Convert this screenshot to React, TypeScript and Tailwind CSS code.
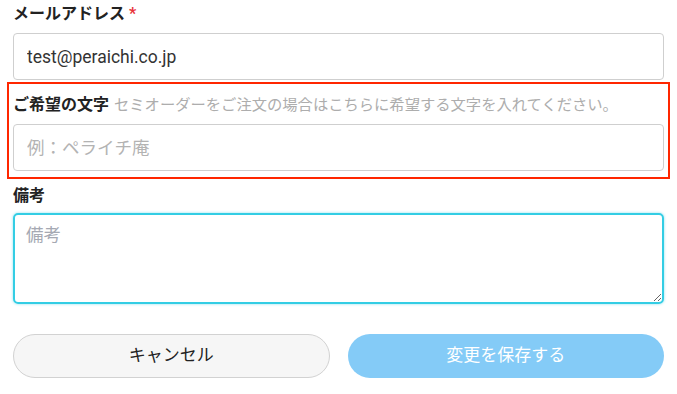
import React from 'react';

const font = "font-['Roboto','Noto_Sans_CJK_JP',sans-serif]";

const App: React.FC = () => {
  return (
    <div className={`w-[677px] h-[394px] bg-white px-[13px] pt-[4px] overflow-hidden ${font}`}>
      <div>
        <label className="block text-[16px] font-bold leading-[20px] text-[#222]">
          メールアドレス<span className="ml-[4px] text-[#e8333a]">*</span>
        </label>
        <input
          type="text"
          defaultValue="test@peraichi.co.jp"
          className="mt-[9px] block w-full h-[47px] rounded-[4px] border border-[#cfcfcf] px-[13px] text-[17.5px] text-[#333] outline-none"
        />
      </div>

      <div className="-mx-[6px] mt-[2px] border-[2.5px] border-[#ff2600] px-[4px] pt-[11px] pb-[6px]">
        <label className="block text-[16px] leading-[20px]">
          <span className="font-bold text-[#222]">ご希望の文字</span>
          <span className="ml-[5px] text-[15.3px] text-[#adadad]">
            セミオーダーをご注文の場合はこちらに希望する文字を入れてください。
          </span>
        </label>
        <input
          type="text"
          placeholder="例：ペライチ庵"
          className="mt-[9px] block w-full h-[47px] rounded-[4px] border border-[#cfcfcf] px-[13px] text-[17.5px] text-[#333] placeholder:text-[#b3b3b3] outline-none"
        />
      </div>

      <div className="mt-[7px]">
        <label className="block text-[16px] font-bold leading-[20px] text-[#222]">備考</label>
        <textarea
          placeholder="備考"
          autoFocus
          className="mt-[7px] block w-full h-[91px] rounded-[5px] border-2 border-[#33cde4] px-[11px] py-[7px] text-[17.5px] text-[#333] placeholder:text-[#a5a9b3] outline-none shadow-[0_0_3px_#8fe0ee]"
        />
      </div>

      <div className="mt-[30px] grid grid-cols-2 gap-[18px]">
        <button className="h-[44px] rounded-full border border-[#d2d2d2] bg-[#f6f6f6] text-[17px] text-[#222]">
          キャンセル
        </button>
        <button className="h-[44px] rounded-full bg-[#84cbf7] text-[17px] text-white">
          変更を保存する
        </button>
      </div>
    </div>
  );
};

export default App;
